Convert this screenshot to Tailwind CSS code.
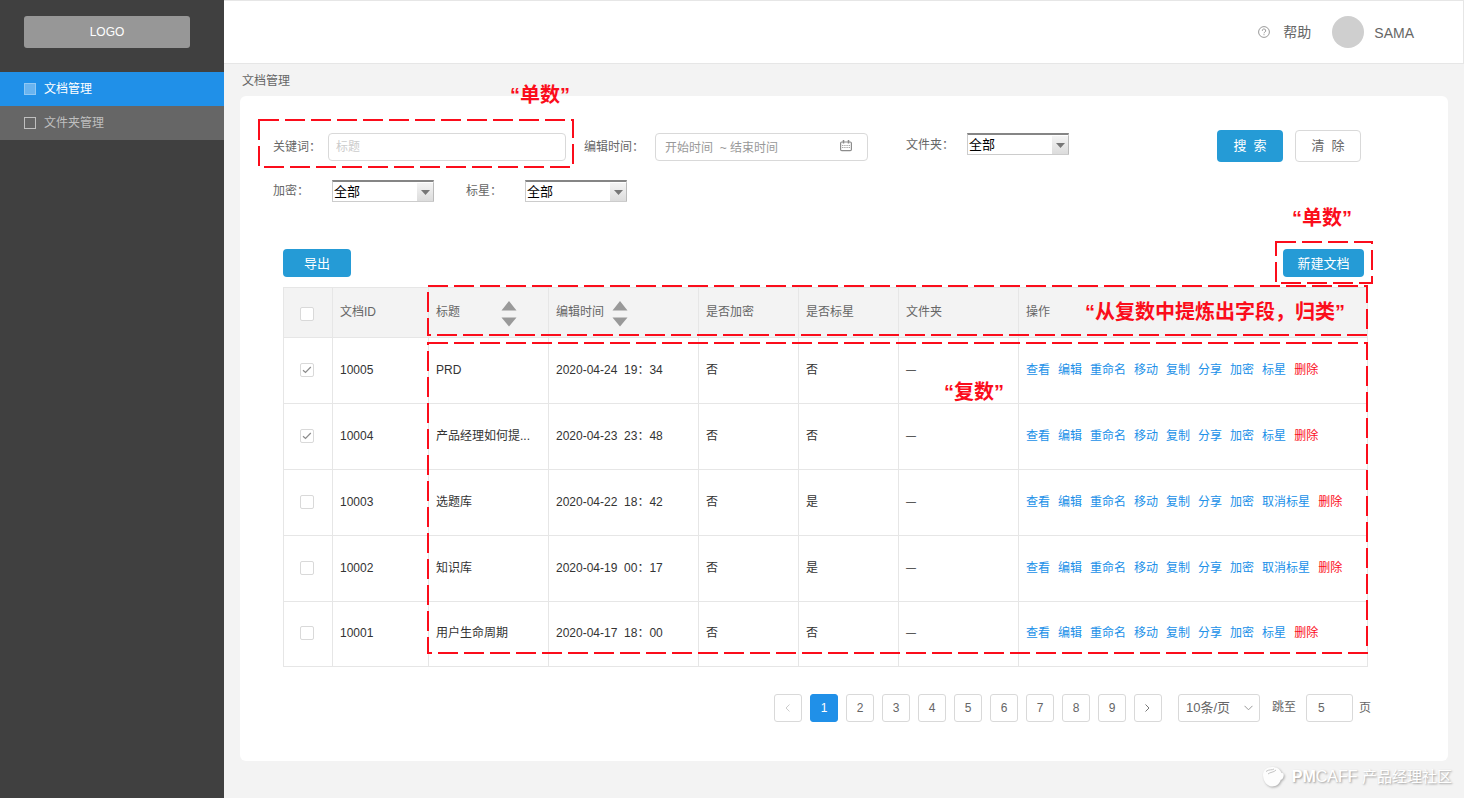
<!DOCTYPE html>
<html lang="zh-CN">
<head>
<meta charset="utf-8">
<title>文档管理</title>
<script src="https://cdn.jsdelivr.net/npm/@tailwindcss/browser@4"></script>
</head>
<body class="flex min-h-screen bg-[#f3f3f3] font-['Liberation_Sans','Noto_Sans_CJK_SC',sans-serif] text-xs text-[#666]">

<aside class="w-56 shrink-0 bg-[#404040] pt-4">
  <div class="mx-6 mr-[34px] flex h-8 items-center justify-center rounded-[3px] bg-[#979797] text-white">LOGO</div>
  <nav class="mt-6">
    <a href="#" class="flex h-[34px] items-center gap-2 bg-[#2090e8] pl-6 text-white"><span class="size-3 border border-[#90c8f4] bg-[#69b4f0]"></span>文档管理</a>
    <a href="#" class="flex h-[34px] items-center gap-2 bg-[#666] pl-6 text-[#bfbfbf]"><span class="size-3 border border-[#bfbfbf]"></span>文件夹管理</a>
  </nav>
</aside>

<div class="flex min-w-0 flex-1 flex-col">
  <header class="flex h-16 items-center justify-end border border-l-0 border-[#e6e6e6] bg-white pr-[49px] text-sm">
    <a href="#" class="flex items-center gap-[13px]">
      <svg class="size-3" viewBox="0 0 12 12" fill="none" stroke="#999" stroke-width="1"><circle cx="6" cy="6" r="5.4"/><path d="M4.3 4.8a1.7 1.7 0 1 1 2.6 1.3c-.6.4-.9.6-.9 1.2M6 8.2v1"/></svg>
      帮助</a>
    <span class="ml-[21px] size-8 rounded-full bg-[#cfcfcf]"></span>
    <span class="ml-2.5 pt-0.5">SAMA</span>
  </header>

  <div class="flex h-8 items-center pt-0.5 pl-[18px]">文档管理</div>

  <main class="mx-4 rounded-md bg-white pt-[34px] pb-[39px]">
    <form class="pl-[33px]">
      <div class="flex items-start pr-[87px]">
        <div class="flex items-start pt-[3px]">
          <div class="relative flex h-7 items-center">
            <label for="kw" class="w-[55px]">关键词：</label>
            <input id="kw" type="text" placeholder="标题" class="h-7 w-[238px] rounded-[4px] border border-[#d9d9d9] px-[7px] outline-none placeholder:text-[#ccc]">
            <div class="pointer-events-none absolute -top-[13px] -right-[7px] -bottom-[6px] -left-[14px]"><svg class="size-full overflow-visible" fill="none" stroke="#fb0d1b" stroke-width="2" stroke-dasharray="20 6"><rect width="100%" height="100%"/></svg></div>
            <span class="absolute -top-[53px] -right-1 text-xl leading-[30px] font-bold whitespace-nowrap text-[#fb0d1b]">“单数”</span>
          </div>
          <div class="relative ml-[18px] flex h-7 items-center">
            <label for="tm" class="w-[71px]">编辑时间：</label>
            <input id="tm" type="text" placeholder="开始时间  ~ 结束时间" class="h-7 w-[213px] rounded-[4px] border border-[#d9d9d9] px-[9px] pt-0.5 outline-none placeholder:text-[#999]">
            <svg class="pointer-events-none absolute top-[7px] right-4 h-3 w-3" viewBox="0 0 12 12" fill="none" stroke="#8c8c8c"><rect x=".6" y="2" width="10.8" height="8.600" rx="1.2" stroke-width="1.2"/><path d="M3.500 0v3.500M8.500 0v3.500" stroke-width="1.5"/><path d="M2 5.500h8M2 7.500h8" stroke="#a8a8a8" stroke-width="1.2" stroke-dasharray="1.4 .8"/></svg>
          </div>
          <div class="ml-[38px] flex h-[22px] items-center">
            <label for="fd" class="w-[61px] pt-0.5">文件夹：</label>
            <div class="relative">
              <select id="fd" class="block h-[22px] w-[102px] appearance-none border border-t-2 border-[#ccc] border-t-[#858585] pl-px text-[13px] leading-[18px] text-black outline-none"><option>全部</option></select>
              <span class="pointer-events-none absolute top-[3px] right-0 bottom-px flex w-[17px] items-center justify-center border-r border-[#bbb] bg-linear-to-b from-[#f4f4f4] to-[#dcdcdc]"><svg class="h-[5px] w-[9px]" viewBox="0 0 9 5"><path d="M0 0h9L4.500 5z" fill="#777"/></svg></span>
            </div>
          </div>
        </div>
        <div class="ml-auto flex gap-3 text-[13px]">
          <button type="button" class="h-8 w-[66px] rounded-[4px] bg-[#259bd6] text-white">搜&nbsp; 索</button>
          <button type="button" class="h-8 w-[66px] rounded-[4px] border border-[#d9d9d9] bg-white">清&nbsp; 除</button>
        </div>
      </div>
      <div class="mt-[18px] flex">
        <div class="flex h-[22px] items-center">
          <label for="enc" class="w-[59px]">加密：</label>
          <div class="relative">
            <select id="enc" class="block h-[22px] w-[102px] appearance-none border border-t-2 border-[#ccc] border-t-[#858585] pl-px text-[13px] leading-[18px] text-black outline-none"><option>全部</option></select>
            <span class="pointer-events-none absolute top-[3px] right-0 bottom-px flex w-[17px] items-center justify-center border-r border-[#bbb] bg-linear-to-b from-[#f4f4f4] to-[#dcdcdc]"><svg class="h-[5px] w-[9px]" viewBox="0 0 9 5"><path d="M0 0h9L4.500 5z" fill="#777"/></svg></span>
          </div>
        </div>
        <div class="ml-8 flex h-[22px] items-center">
          <label for="star" class="w-[59px]">标星：</label>
          <div class="relative">
            <select id="star" class="block h-[22px] w-[102px] appearance-none border border-t-2 border-[#ccc] border-t-[#858585] pl-px text-[13px] leading-[18px] text-black outline-none"><option>全部</option></select>
            <span class="pointer-events-none absolute top-[3px] right-0 bottom-px flex w-[17px] items-center justify-center border-r border-[#bbb] bg-linear-to-b from-[#f4f4f4] to-[#dcdcdc]"><svg class="h-[5px] w-[9px]" viewBox="0 0 9 5"><path d="M0 0h9L4.500 5z" fill="#777"/></svg></span>
          </div>
        </div>
      </div>
    </form>

    <div class="mt-[47px] flex justify-between pr-[84px] pl-[43px] text-[13px]">
      <button type="button" class="h-7 w-[68px] rounded-[4px] bg-[#259bd6] pt-0.5 text-white">导出</button>
      <div class="relative">
        <button type="button" class="h-7 w-[81px] rounded-[4px] bg-[#259bd6] pt-0.5 text-white">新建文档</button>
        <div class="pointer-events-none absolute -top-[7px] -right-2 -bottom-[6px] -left-[7px]"><svg class="size-full overflow-visible" fill="none" stroke="#fb0d1b" stroke-width="2" stroke-dasharray="20 6"><rect width="100%" height="100%"/></svg></div>
        <span class="absolute -top-[46px] left-[9px] text-xl leading-[30px] font-bold whitespace-nowrap text-[#fb0d1b]">“单数”</span>
      </div>
    </div>

    <div class="relative mt-2.5 mr-20 ml-[43px]">
      <table class="w-full table-fixed border-collapse text-left [&_td]:border [&_td]:border-[#e6e6e6] [&_td]:px-[7px] [&_td]:pb-0.5 [&_th]:border [&_th]:border-[#e6e6e6] [&_th]:px-[7px] [&_th]:pb-0.5 [&_th]:font-normal">
        <thead>
          <tr class="h-[50px] bg-[#f3f3f3]">
            <th class="w-[49px]"><input type="checkbox" aria-label="全选" class="mt-[5px] ml-[9px] block size-3.5 appearance-none rounded-xs border border-[#d9d9d9] bg-white"></th>
            <th class="w-24">文档ID</th>
            <th class="w-[120px]"><div class="flex items-center justify-between pr-6">标题<button type="button" aria-label="按标题排序"><svg class="mt-1 block h-[26px] w-4" viewBox="0 0 16 26" fill="#999"><path d="M8 0l7.500 9.500h-15zM8 25.500L.5 16.500h15z"/></svg></button></div></th>
            <th class="w-[150px]"><div class="flex items-center gap-2">编辑时间<button type="button" aria-label="按编辑时间排序"><svg class="mt-1 block h-[26px] w-4" viewBox="0 0 16 26" fill="#999"><path d="M8 0l7.500 9.500h-15zM8 25.500L.5 16.500h15z"/></svg></button></div></th>
            <th class="w-[100px]">是否加密</th>
            <th class="w-[100px]">是否标星</th>
            <th class="w-[120px]">文件夹</th>
            <th>操作</th>
          </tr>
        </thead>
        <tbody id="rows" class="text-[#333]"></tbody>
      </table>
      <div class="pointer-events-none absolute -top-px right-px left-[145px] h-[49px]"><svg class="size-full overflow-visible" fill="none" stroke="#fb0d1b" stroke-width="2" stroke-dasharray="20 6"><rect width="100%" height="100%"/></svg></div>
      <span class="absolute top-2.5 right-[23px] text-xl leading-[30px] font-bold whitespace-nowrap text-[#fb0d1b]">“从复数中提炼出字段，归类”</span>
      <div class="pointer-events-none absolute top-14 right-px bottom-[14px] left-[145px]"><svg class="size-full overflow-visible" fill="none" stroke="#fb0d1b" stroke-width="2" stroke-dasharray="20 6"><rect width="100%" height="100%"/></svg></div>
      <span class="absolute top-[90px] left-[661px] text-xl leading-[30px] font-bold whitespace-nowrap text-[#fb0d1b]">“复数”</span>
    </div>

    <div class="mt-[27px] flex items-center justify-end pr-[77px]">
      <nav aria-label="分页" class="flex gap-2 [&>button]:flex [&>button]:size-7 [&>button]:items-center [&>button]:justify-center [&>button]:rounded-[3px] [&>button]:border [&>button]:border-[#d9d9d9]">
        <button type="button" aria-label="上一页"><svg class="h-2 w-[5px]" viewBox="0 0 5 8" fill="none" stroke="#ccc"><path d="M4.500.5L1 4l3.500 3.500"/></svg></button>
        <button type="button" aria-current="page" class="border-[#2090e8]! bg-[#2090e8] text-white">1</button>
        <button type="button">2</button>
        <button type="button">3</button>
        <button type="button">4</button>
        <button type="button">5</button>
        <button type="button">6</button>
        <button type="button">7</button>
        <button type="button">8</button>
        <button type="button">9</button>
        <button type="button" aria-label="下一页"><svg class="h-2 w-[5px]" viewBox="0 0 5 8" fill="none" stroke="#777"><path d="M.5.5L4 4 .5 7.500"/></svg></button>
      </nav>
      <div class="relative ml-4">
        <select aria-label="每页条数" class="block h-7 w-[82px] appearance-none rounded-[3px] border border-[#d9d9d9] pl-[7px] text-[13px] outline-none"><option>10条/页</option></select>
        <svg class="pointer-events-none absolute top-[11px] right-[7px] h-[6px] w-[9px]" viewBox="0 0 9 6" fill="none" stroke="#999"><path d="M.5.8l4 4 4-4"/></svg>
      </div>
      <label for="jump" class="ml-3 pb-0.5">跳至</label>
      <input id="jump" type="text" value="5" class="ml-2.5 h-7 w-[47px] rounded-[3px] border border-[#d9d9d9] pl-[11px] outline-none">
      <span class="ml-[6px]">页</span>
    </div>
  </main>

  <footer class="flex h-8 items-center justify-end gap-[7px] pr-3 text-base text-white">
    <svg class="size-6 drop-shadow-[1px_1px_1px_#aaa]" viewBox="0 0 24 24" fill="#fdfdfd"><path d="M2 10C2 5 6 2 11 2s8 2 9.500 6c2-.5 2.500 1 2 3.500-.3 1.800-1.300 3-2.700 3.300C18.500 19 15.500 21.500 11 21.500S2 16.500 2 10z"/><path d="M5 6.500c3-2.500 6-1 8-2.500M7 9c2-2 6-1.500 8-4" fill="none" stroke="#c4c4c4"/></svg>
    <span class="[text-shadow:1px_1px_2px_#999]"><b>PM</b>CAFF <span class="text-[15px]">产品经理社区</span></span>
  </footer>
</div>

<script>
const docs = [
  ['10005', 'PRD', '2020-04-24  19：34', '否', '否', true],
  ['10004', '产品经理如何提...', '2020-04-23  23：48', '否', '否', true],
  ['10003', '选题库', '2020-04-22  18：42', '否', '是', false],
  ['10002', '知识库', '2020-04-19  00：17', '否', '是', false],
  ['10001', '用户生命周期', '2020-04-17  18：00', '否', '否', false]
];
document.getElementById('rows').innerHTML = docs.map(([id, title, time, enc, star, on]) => `
<tr class="h-[66px] last:h-[65px]">
  <td><span class="relative ml-[9px] block size-3.5"><input type="checkbox" aria-label="选择 ${id}" ${on ? 'checked' : ''} class="peer block size-3.5 appearance-none rounded-xs border border-[#d9d9d9] bg-white"><svg class="pointer-events-none invisible absolute inset-0 size-3.5 peer-checked:visible" viewBox="0 0 14 14" fill="none" stroke="#8c8c8c" stroke-width="1.200"><path d="M3 7.200l2.500 2.300L10.800 4"/></svg></span></td>
  <td>${id}</td>
  <td class="whitespace-nowrap">${title}</td>
  <td class="whitespace-pre">${time}</td>
  <td>${enc}</td>
  <td>${star}</td>
  <td class="text-[10px]">—</td>
  <td><div class="flex gap-2 whitespace-nowrap text-[#2090e8]">${['查看', '编辑', '重命名', '移动', '复制', '分享', '加密', star === '是' ? '取消标星' : '标星'].map(t => `<a href="#">${t}</a>`).join('')}<a href="#" class="text-[#fb0d1b]">删除</a></div></td>
</tr>`).join('');
</script>
</body>
</html>
